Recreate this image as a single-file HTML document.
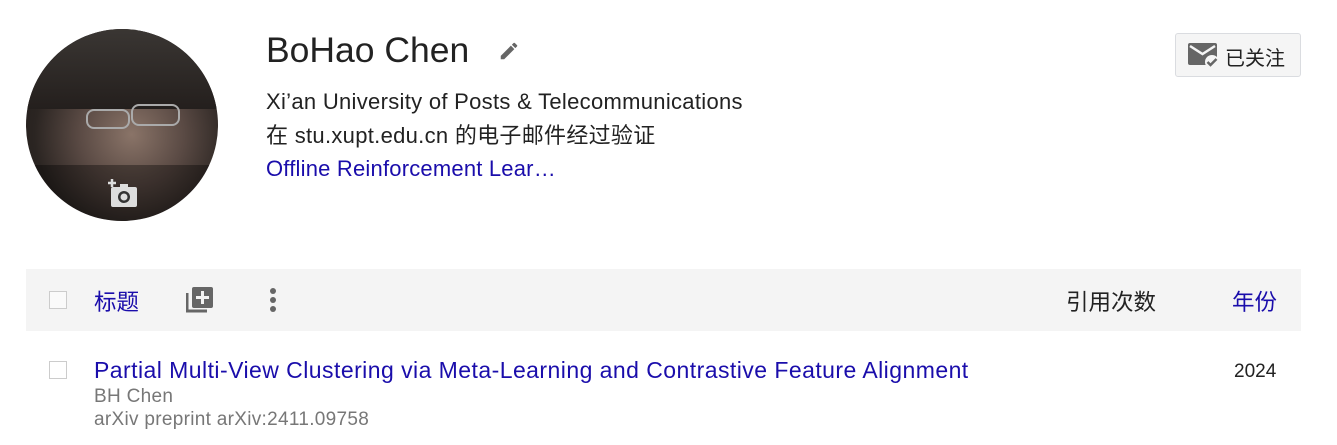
<!DOCTYPE html>
<html><head><meta charset="utf-8"><style>
body{margin:0;width:1337px;height:445px;background:#fff;font-family:"Liberation Sans","Noto Sans CJK SC",sans-serif;position:relative;overflow:hidden;color:#222}
.a{position:absolute;white-space:nowrap}
</style></head><body>
<div class="a" style="left:26px;top:29px;width:192px;height:192px;border-radius:50%;overflow:hidden;background:radial-gradient(ellipse at 55% 55%,#8a7468 0%,#5a4a44 35%,#2b2522 65%,#1a1716 100%)">
  <div class="a" style="left:0;top:0;width:192px;height:80px;background:linear-gradient(#3a3633,#241f1d)"></div>
  <div class="a" style="left:60px;top:80px;width:40px;height:16px;border:2px solid #aaa;border-radius:8px"></div>
  <div class="a" style="left:105px;top:75px;width:45px;height:18px;border:2px solid #aaa;border-radius:8px"></div>
  <div class="a" style="left:0;top:136px;width:192px;height:56px;background:rgba(0,0,0,0.35)"></div>
  <svg class="a" style="left:80px;top:150px" width="32" height="30" viewBox="0 0 32 30"><rect x="5" y="8" width="26" height="20" rx="2" fill="#ddd"/><rect x="14" y="5" width="8" height="4" fill="#ddd"/><circle cx="18" cy="18" r="6" fill="#333"/><circle cx="18" cy="18" r="3.5" fill="#ddd"/><path d="M2 4h8M6 0v8" stroke="#ddd" stroke-width="2.5"/></svg>
</div>
<div class="a" style="left:266px;top:30px;font-size:35.5px;color:#222">BoHao Chen</div>
<svg class="a" style="left:498px;top:40px" width="22" height="22" viewBox="0 0 24 24"><path d="M3 17.25V21h3.75L17.81 9.94l-3.75-3.75L3 17.25zM20.71 7.04a1 1 0 000-1.41l-2.34-2.34a1 1 0 00-1.41 0l-1.83 1.83 3.75 3.75 1.83-1.83z" fill="#666"/></svg>
<div class="a" style="left:266px;top:89px;font-size:22px;letter-spacing:0.3px">Xi’an University of Posts &amp; Telecommunications</div>
<div class="a" style="left:266px;top:118px;font-size:22px;letter-spacing:0.3px">在 stu.xupt.edu.cn 的电子邮件经过验证</div>
<div class="a" style="left:266px;top:156px;font-size:22px;letter-spacing:0.2px;color:#1a0dab">Offline Reinforcement Lear…</div>
<div class="a" style="left:1175px;top:33px;width:124px;height:42px;border:1px solid #dadce0;border-radius:3px;background:#f5f5f5"></div>
<svg class="a" style="left:1188px;top:43px" width="32" height="26" viewBox="0 0 32 26"><rect x="0" y="0" width="29" height="22" rx="2" fill="#666"/><path d="M2 3l12.5 8L27 3" stroke="#f5f5f5" stroke-width="2.5" fill="none"/><circle cx="24" cy="19" r="7" fill="#f5f5f5"/><path d="M19.5 19l3 3 6-6" stroke="#666" stroke-width="2.5" fill="none"/></svg>
<div class="a" style="left:1225px;top:42px;font-size:20px;color:#222">已关注</div>
<div class="a" style="left:26px;top:269px;width:1275px;height:62px;background:#f4f4f4"></div>
<div class="a" style="left:49px;top:291px;width:16px;height:16px;border:1px solid #ccc;background:#fafafa"></div>
<div class="a" style="left:94px;top:285px;font-size:22.5px;color:#1a0dab">标题</div>
<svg class="a" style="left:186px;top:286px" width="28" height="28" viewBox="0 0 28 28"><path d="M1 7v18h20" stroke="#666" stroke-width="3" fill="none"/><rect x="6" y="1" width="21" height="21" rx="2" fill="#666"/><path d="M16.5 5v13M10 11.5h13" stroke="#f4f4f4" stroke-width="3"/></svg>
<svg class="a" style="left:268px;top:287px" width="10" height="28" viewBox="0 0 10 28"><circle cx="5" cy="4" r="3" fill="#666"/><circle cx="5" cy="13" r="3" fill="#666"/><circle cx="5" cy="22" r="3" fill="#666"/></svg>
<div class="a" style="left:1066px;top:285px;font-size:22.5px;color:#222">引用次数</div>
<div class="a" style="left:1232px;top:285px;font-size:22.5px;color:#1a0dab">年份</div>
<div class="a" style="left:49px;top:361px;width:16px;height:16px;border:1px solid #ccc"></div>
<div class="a" style="left:94px;top:357px;font-size:23px;letter-spacing:0.45px;color:#1a0dab">Partial Multi-View Clustering via Meta-Learning and Contrastive Feature Alignment</div>
<div class="a" style="left:94px;top:386px;font-size:19px;letter-spacing:0.3px;color:#777">BH Chen</div>
<div class="a" style="left:94px;top:409px;font-size:19px;letter-spacing:0.3px;color:#777">arXiv preprint arXiv:2411.09758</div>
<div class="a" style="left:1234px;top:361px;font-size:19px;color:#222">2024</div>
</body></html>
